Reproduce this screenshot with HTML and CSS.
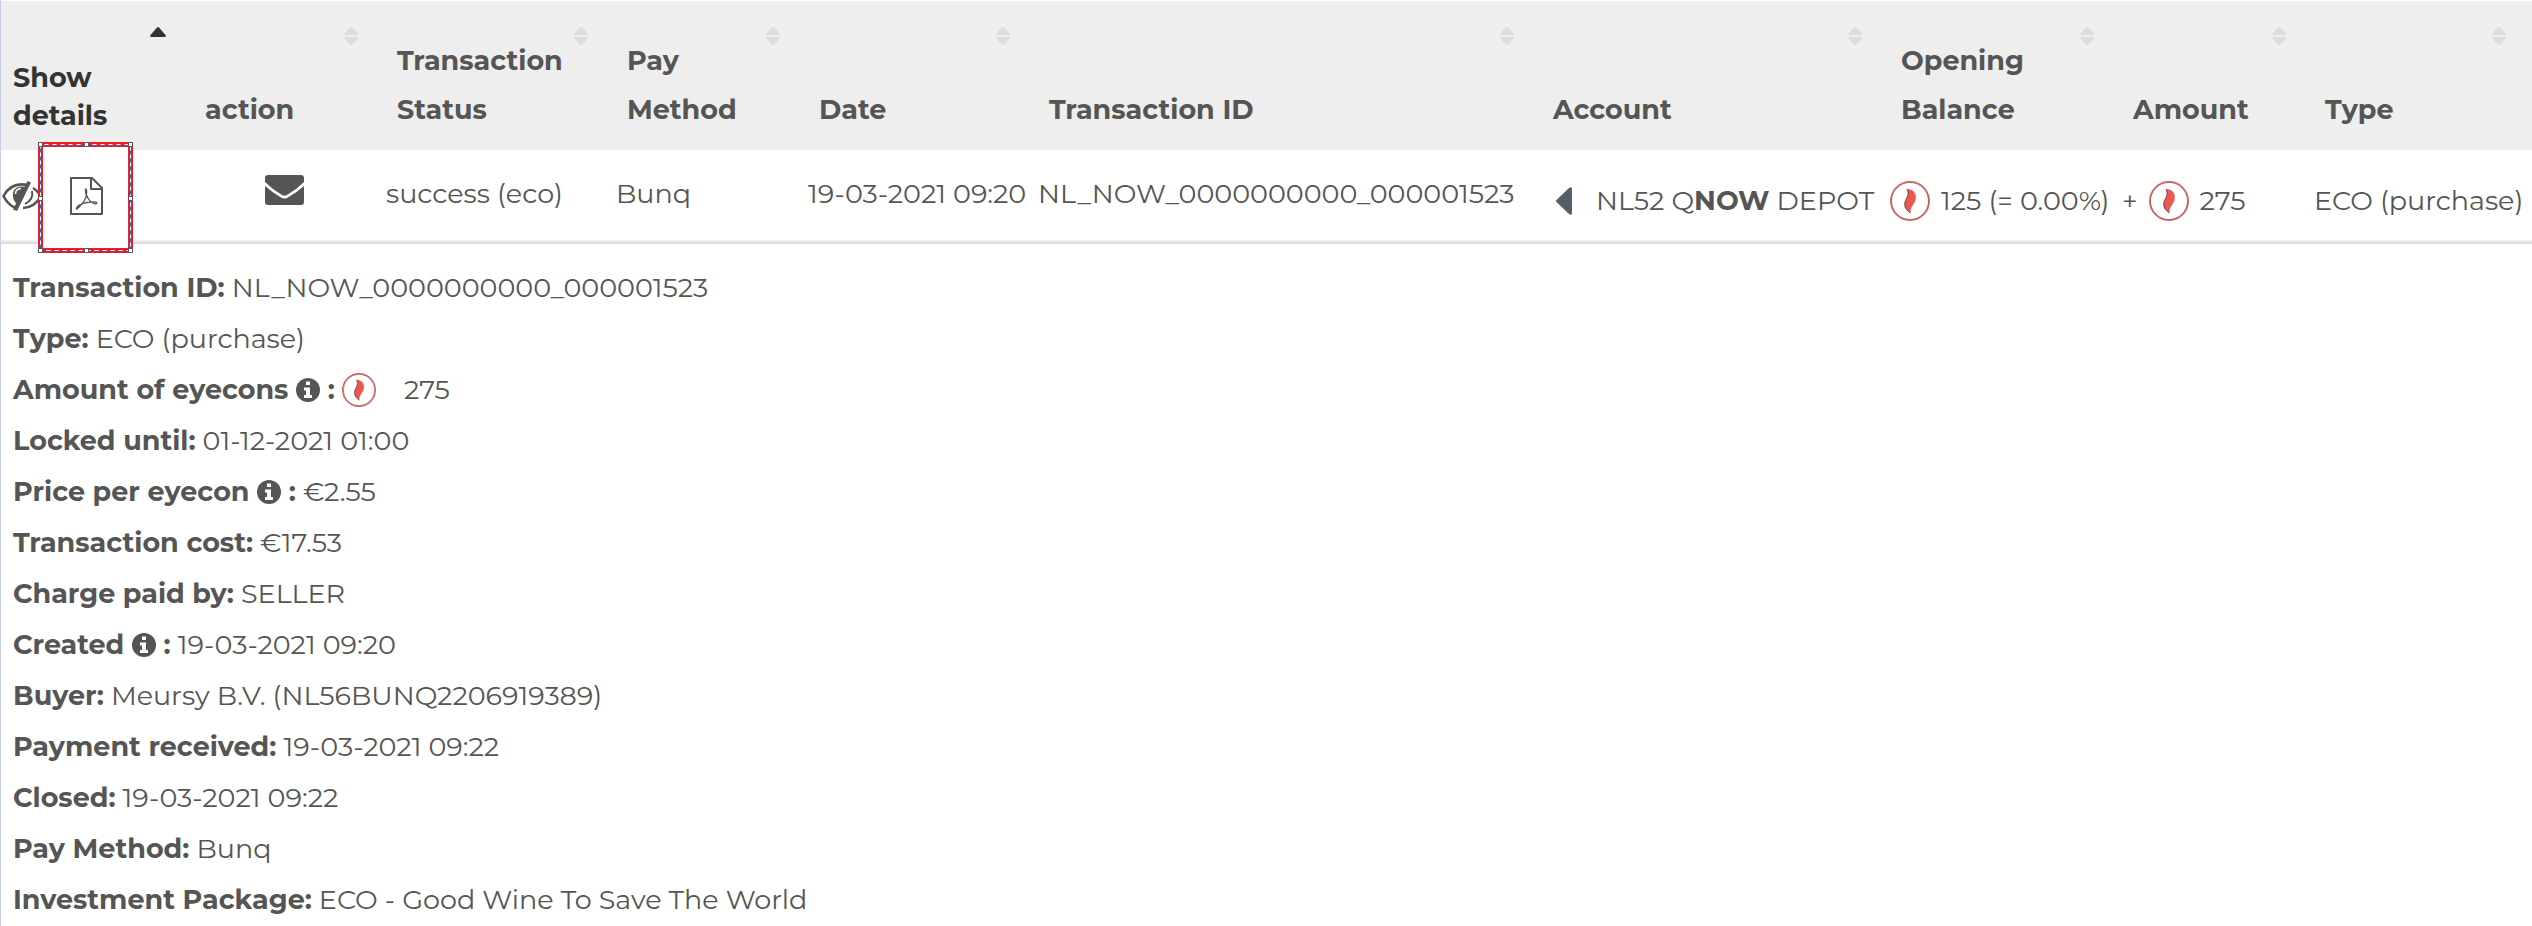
FILE: index.html
```html
<!DOCTYPE html>
<html lang="en">
<head>
    <meta charset="utf-8">
    <meta content="width=device-width, initial-scale=1.0" name="viewport">
    <title>Transactions</title>
    <link rel="stylesheet" href="styles.css">
</head>
<body>
    <!-- shared icons -->
    <svg class="sprite">
        <symbol id="sort" viewBox="0 0 14 18">
            <path d="M6 .5Q7-.5 8 .5L13.6 6.4Q14.3 8 12.6 8H1.4Q-.3 8 .4 6.4ZM6 17.5Q7 18.5 8 17.5L13.6 11.6Q14.3 10 12.6 10H1.4Q-.3 10 .4 11.6Z"/>
        </symbol>
        <symbol id="coin" viewBox="0 0 40 40">
            <circle cx="20" cy="20" r="19.300" fill="#fff" stroke="#ee574f" stroke-width="1.300"/>
            <circle cx="20" cy="20" r="18.500" fill="none" stroke="#54303a" stroke-width=".6"/>
            <path d="M17 8C24 8.500 27 13 25.500 19C24 24 20 26 20.500 32C16 29 14 26 15 21C16 17 20 14 17 8Z" fill="#ee574f"/>
            <path d="M17 8C20 14 16 17 15 21C14 26 16 29 20.500 32" fill="none" stroke="#54303a" stroke-width=".8"/>
        </symbol>
        <symbol id="info" viewBox="0 0 24 24">
            <circle cx="12" cy="12" r="12"/>
            <path d="M10 3.500h4v3.500h-4zM8 9.500h6v7.500h2v3H8v-3h2v-4.500H8z" fill="#fff"/>
        </symbol>
    </svg>

    <table class="transactions">
        <colgroup>
            <col class="c-details"><col class="c-action"><col class="c-status"><col class="c-method"><col class="c-date">
            <col class="c-id"><col class="c-account"><col class="c-balance"><col class="c-amount"><col class="c-type">
        </colgroup>
        <thead>
            <tr>
                <th class="active">Show details<button class="sort" aria-label="Sort"><svg viewBox="0 0 16 10"><path d="M7 .5Q8-.5 9 .5L15.500 8Q16.500 10 14.500 10H1.500Q-.5 10 .5 8Z"/></svg></button></th>
                <th>action<button class="sort" aria-label="Sort"><svg><use href="#sort"/></svg></button></th>
                <th>Transaction Status<button class="sort" aria-label="Sort"><svg><use href="#sort"/></svg></button></th>
                <th>Pay<br>Method<button class="sort" aria-label="Sort"><svg><use href="#sort"/></svg></button></th>
                <th>Date<button class="sort" aria-label="Sort"><svg><use href="#sort"/></svg></button></th>
                <th>Transaction ID<button class="sort" aria-label="Sort"><svg><use href="#sort"/></svg></button></th>
                <th>Account<button class="sort" aria-label="Sort"><svg><use href="#sort"/></svg></button></th>
                <th>Opening Balance<button class="sort" aria-label="Sort"><svg><use href="#sort"/></svg></button></th>
                <th>Amount<button class="sort" aria-label="Sort"><svg><use href="#sort"/></svg></button></th>
                <th>Type<button class="sort" aria-label="Sort"><svg><use href="#sort"/></svg></button></th>
            </tr>
        </thead>
        <tbody>
            <tr>
                <td class="details-cell">
                    <button class="icon-btn" aria-label="Hide details">
                        <svg class="eye" viewBox="0 0 40 30">
                            <path d="M26 4Q9 .5 1.500 15Q6 24 13 26.500M31 7Q36 10 39 15Q33 26 21 27" fill="none" stroke="#555" stroke-width="2.600"/>
                            <path d="M24 6Q13 4 11 12Q10 19 15 23Z"/>
                            <path d="M13.500 13Q13.500 8 19 7.500" fill="none" stroke="#fff" stroke-width="1.500"/>
                            <path d="M30 10Q32 18 23 23" fill="none" stroke="#555" stroke-width="2"/>
                            <path d="M25.500 0L29 1.500L15 30L11 28.500Z"/>
                            <path d="M30.500 2.500L17 30" stroke="#fff" stroke-width="2"/>
                        </svg>
                    </button>
                    <button class="pdf-btn" aria-label="Download PDF">
                        <svg class="frame" viewBox="0 0 95 111">
                            <path d="M2.500 2.500h90v106h-90z" fill="#fff" stroke="#ed1c24" stroke-width="5"/>
                            <path d="M2.500 2.500h90v106h-90z" fill="none" stroke="#fff"/>
                            <path d="M2.500 2.500h90v106h-90z" fill="none" stroke="#0078d7" stroke-dasharray="4 4"/>
                            <path d="M.5.500h4v4h-4zM46.500.500h4v4h-4zM90.500.500h4v4h-4zM.5 54.500h4v4h-4zM90.500 54.500h4v4h-4zM.5 106.500h4v4h-4zM46.500 106.500h4v4h-4zM90.500 106.500h4v4h-4z" fill="#fff" stroke="#555"/>
                            <g transform="translate(32 35)" fill="none" stroke="#555" stroke-linejoin="round">
                                <path d="M1 1H22L32 11V37H1ZM21 1V12H32" stroke-width="2"/>
                                <path d="M15.500 12Q17 12 16.500 17Q16 24 8 31Q6 33 6.500 31Q9 27 17 25.500Q26 24 27 26Q26 28 21 25Q15 19 15.500 12Z" stroke-width="1.300"/>
                            </g>
                        </svg>
                    </button>
                </td>
                <td class="mail-cell">
                    <button class="icon-btn" aria-label="Send mail">
                        <svg class="mail" viewBox="0 0 39 30">
                            <path d="M3 0H36Q39 0 39 3V7Q31 15 22 20Q19.500 21.500 17 20Q8 15 0 7V3Q0 0 3 0ZM0 11Q8 18 16 22.500Q19.500 24.500 23 22.500Q31 18 39 11V27Q39 30 36 30H3Q0 30 0 27Z"/>
                        </svg>
                    </button>
                </td>
                <td>success (eco)</td>
                <td>Bunq</td>
                <td>19-03-2021 09:20</td>
                <td>NL_NOW_0000000000_000001523</td>
                <td class="icon-cell"><div class="account"><svg class="arrow" viewBox="0 0 16 28"><path d="M.5 13Q-.5 14 .5 15L13 27Q16 29 16 26V2Q16-1 13 1Z"/></svg><span>NL52 Q<b>NOW</b> DEPOT</span></div></td>
                <td class="icon-cell"><div class="money"><svg class="coin"><use href="#coin"/></svg>125 (= 0.00%)</div></td>
                <td class="icon-cell"><div class="money">+<svg class="coin"><use href="#coin"/></svg>275</div></td>
                <td class="icon-cell">ECO (purchase)</td>
            </tr>
        </tbody>
    </table>

    <ul class="details">
        <li><b>Transaction ID:</b> NL_NOW_0000000000_000001523</li>
        <li><b>Type:</b> ECO (purchase)</li>
        <li><b>Amount of eyecons <svg class="info"><use href="#info"/></svg> :</b> <svg class="coin small"><use href="#coin"/></svg>275</li>
        <li><b>Locked until:</b> 01-12-2021 01:00</li>
        <li><b>Price per eyecon <svg class="info"><use href="#info"/></svg> :</b> €2.55</li>
        <li><b>Transaction cost:</b> €17.53</li>
        <li><b>Charge paid by:</b> SELLER</li>
        <li><b>Created <svg class="info"><use href="#info"/></svg> :</b> 19-03-2021 09:20</li>
        <li><b>Buyer:</b> Meursy B.V. (NL56BUNQ2206919389)</li>
        <li><b>Payment received:</b> 19-03-2021 09:22</li>
        <li><b>Closed:</b> 19-03-2021 09:22</li>
        <li><b>Pay Method:</b> Bunq</li>
        <li><b>Investment Package:</b> ECO - Good Wine To Save The World</li>
    </ul>
</body>
</html>
```
FILE: styles.css
```css
*{
    box-sizing: border-box;
}
body{
    margin: 0;
    padding-top: 1px;
    border-left: 1px solid #c5cfe5;
    background: #fff;
    color: #555;
    font-family: Montserrat, Inter, sans-serif;
    font-size: 27px;
    font-weight: 400;
}
b{
    font-weight: 700;
}
svg{
    fill: #555;
}
button{
    padding: 0;
    border: none;
    background: none;
    cursor: pointer;
}
button svg{
    display: block;
}
.sprite{
    display: none;
}

/* table */
.transactions{
    width: 100%;
    table-layout: fixed;
    border-collapse: separate;
    border-spacing: 0;
}
.c-details, .c-action, .c-method, .c-amount{width: 192px;}
.c-status, .c-date{width: 230px;}
.c-id{width: 504px;}
.c-account{width: 348px;}
.c-balance{width: 232px;}
.c-type{width: 220px;}

th{
    position: relative;
    height: 149px;
    padding: 0 12px 16px 12px;
    background: #eee;
    font-weight: 700;
    line-height: 49px;
    text-align: left;
    vertical-align: bottom;
}
th.active{
    padding-right: 72px;
    padding-bottom: 15px;
    color: #333;
    line-height: 38px;
}
.sort{
    position: absolute;
    top: 26px;
    right: 27px;
}
.sort svg{
    width: 14px;
    height: 18px;
    fill: #ddd;
}
.active .sort svg{
    width: 16px;
    height: 10px;
    fill: #333;
}
td{
    position: relative;
    height: 94px;
    padding: 24px 0 0 1px;
    border-bottom: 2px solid #ddd;
    box-shadow: inset 0 -2px #eee;
    line-height: 40px;
    vertical-align: top;
    white-space: nowrap;
}
.details-cell{
    padding-top: 31px;
}
.mail-cell{
    padding-left: 72px;
    padding-top: 25px;
}
.icon-cell{
    padding-top: 31px;
}
.eye{
    width: 40px;
    height: 30px;
}
.mail{
    width: 39px;
    height: 30px;
}
/* selected pdf button, drawn over the row */
.pdf-btn{
    position: absolute;
    top: -8px;
    left: 37px;
    z-index: 1;
}
.frame{
    width: 95px;
    height: 111px;
}
.account, .money{
    display: flex;
    align-items: center;
}
.account{
    gap: 24px;
    padding-left: 14px;
}
.money{
    gap: 11px;
}
.arrow{
    width: 16px;
    height: 28px;
    fill: #565d66;
}
.coin{
    width: 40px;
    height: 40px;
}

/* details */
.details{
    margin: 0;
    padding: 18px 12px 12px;
    list-style: none;
    line-height: 51px;
}
.info{
    width: 24px;
    height: 24px;
    vertical-align: -3px;
}
.coin.small{
    width: 34px;
    height: 34px;
    margin-right: 28px;
    vertical-align: -8px;
}
```
